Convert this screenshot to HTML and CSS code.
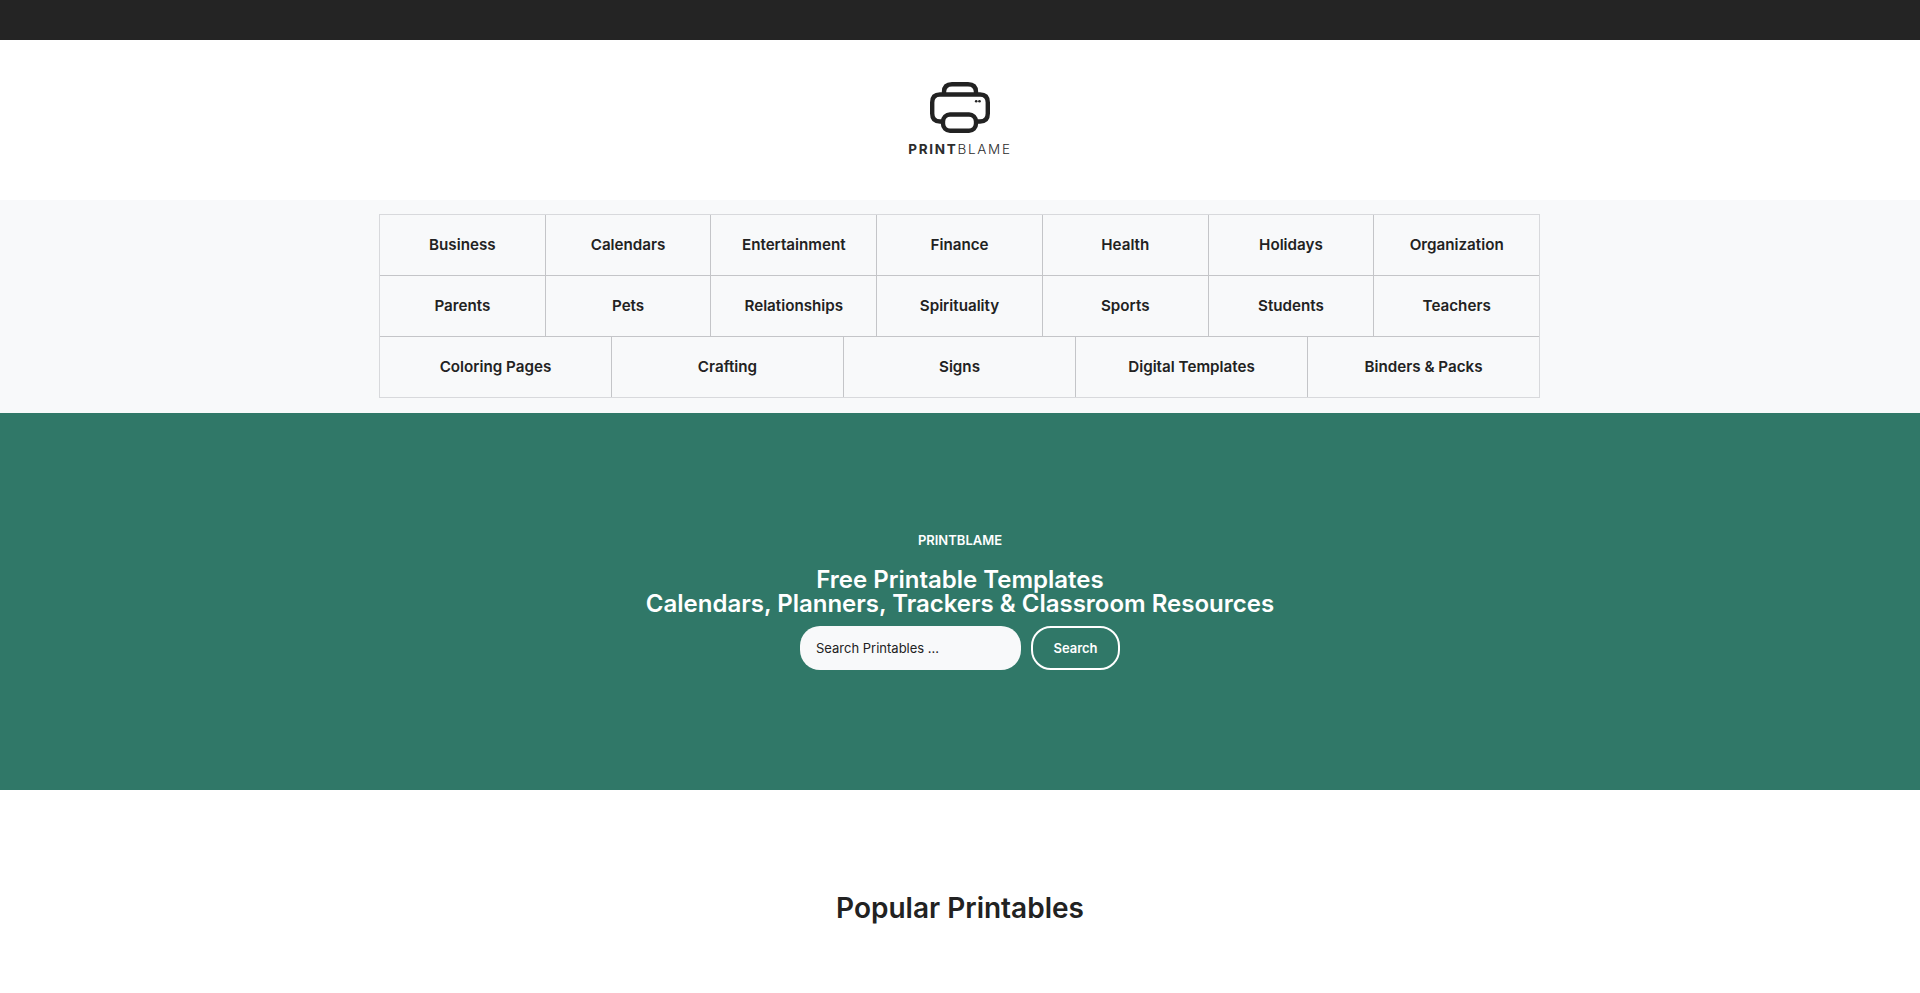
FILE: index.html
```html
<!DOCTYPE html>
<html lang="en">
<head>
    <meta charset="UTF-8">
    <meta name="viewport" content="width=device-width, initial-scale=1.0">
    <title>PrintBlame</title>
    <link rel="stylesheet" href="styles.css">
</head>
<body>
    <div class="topbar"></div>

    <header class="logo-bar">
        <a class="logo" href="#">
            <svg class="logo-icon" width="60" height="51" viewBox="0 0 60 51" fill="none" stroke="#222" stroke-width="4.4">
                <path d="M14 12.5V10Q14 2.2 22 2.2H38Q46 2.2 46 10V12.5"/>
                <path d="M13 39.5H10Q2.2 39.5 2.2 31.5V20.5Q2.2 12.5 10 12.5H50Q57.8 12.5 57.8 20.5V31.5Q57.8 39.5 50 39.5H46"/>
                <rect x="13" y="32.5" width="33" height="16.3" rx="7"/>
                <circle cx="46.2" cy="19.2" r="1.3" fill="#222" stroke="none"/>
                <circle cx="49.5" cy="19.2" r="1.3" fill="#222" stroke="none"/>
            </svg>
            <span class="logo-text"><b>PRINT</b>BLAME</span>
        </a>
    </header>

    <nav class="cat-nav">
        <div class="cat-table">
            <div class="cat-row">
                <a href="#">Business</a>
                <a href="#">Calendars</a>
                <a href="#">Entertainment</a>
                <a href="#">Finance</a>
                <a href="#">Health</a>
                <a href="#">Holidays</a>
                <a href="#">Organization</a>
            </div>
            <div class="cat-row">
                <a href="#">Parents</a>
                <a href="#">Pets</a>
                <a href="#">Relationships</a>
                <a href="#">Spirituality</a>
                <a href="#">Sports</a>
                <a href="#">Students</a>
                <a href="#">Teachers</a>
            </div>
            <div class="cat-row">
                <a href="#">Coloring Pages</a>
                <a href="#">Crafting</a>
                <a href="#">Signs</a>
                <a href="#">Digital Templates</a>
                <a href="#">Binders &amp; Packs</a>
            </div>
        </div>
    </nav>

    <section class="hero">
        <p class="eyebrow">PRINTBLAME</p>
        <h1>Free Printable Templates<br>Calendars, Planners, Trackers &amp; Classroom Resources</h1>
        <form class="search">
            <input type="text" placeholder="Search Printables ...">
            <button type="button">Search</button>
        </form>
    </section>

    <section class="popular">
        <h2>Popular Printables</h2>
    </section>
</body>
</html>
```

FILE: styles.css
```css
body {
    font-family: Inter, "Liberation Sans", sans-serif;
    margin: 0;
    padding: 0;
    background-color: white;
    color: #222;
}
.topbar {
    height: 40px;
    background-color: #242424;
}
.logo-bar {
    height: 160px;
    display: flex;
    justify-content: center;
    align-items: flex-start;
}
.logo {
    display: flex;
    flex-direction: column;
    align-items: center;
    margin-top: 41.5px;
    color: #2c2c2c;
    text-decoration: none;
}
.logo-icon {
    display: block;
}
.logo-text {
    margin-top: 8px;
    font-size: 13.5px;
    line-height: 16px;
    letter-spacing: 1.7px;
    font-weight: 300;
}
.logo-text b {
    font-weight: 700;
}
.cat-nav {
    background-color: #f8f9fa;
    padding: 14px 1px 15px 0;
}
.cat-table {
    width: 1161px;
    margin: 0 auto;
    box-sizing: border-box;
    border: 1px solid #d8d9dc;
}
.cat-row {
    display: flex;
    height: 61px;
    box-sizing: border-box;
    border-bottom: 1px solid #c4c5c8;
}
.cat-row:last-child {
    height: 60px;
    border-bottom: none;
}
.cat-row a {
    flex: 1 1 0;
    display: flex;
    align-items: center;
    justify-content: center;
    padding-bottom: 2px;
    font-size: 15.2px;
    font-weight: 600;
    color: #222;
    text-decoration: none;
    border-left: 1px solid #c4c5c8;
}
.cat-row a:first-child {
    border-left: none;
}
.hero {
    height: 377px;
    box-sizing: border-box;
    padding-top: 118px;
    background-color: #307868;
    color: white;
    text-align: center;
}
.eyebrow {
    margin: 0 0 19px;
    font-size: 13px;
    line-height: 18px;
    font-weight: 600;
}
.hero h1 {
    margin: 0 0 10px;
    font-size: 24px;
    line-height: 24px;
    font-weight: 600;
}
.search {
    display: flex;
    justify-content: center;
    gap: 10px;
}
.search input {
    width: 221px;
    height: 44px;
    box-sizing: border-box;
    padding: 0 16px;
    border: none;
    border-radius: 20px;
    background-color: #f8f9fa;
    font-family: inherit;
    font-size: 13px;
    color: #222;
}
.search input::placeholder {
    color: #222;
    opacity: 1;
}
.search button {
    width: 89px;
    height: 44px;
    border: 2px solid white;
    border-radius: 20px;
    background-color: transparent;
    color: white;
    font-family: inherit;
    font-size: 13px;
    font-weight: 600;
    cursor: pointer;
}
.popular {
    padding-top: 99px;
    text-align: center;
}
.popular h2 {
    margin: 0;
    font-size: 28px;
    line-height: 38px;
    font-weight: 600;
}
```
